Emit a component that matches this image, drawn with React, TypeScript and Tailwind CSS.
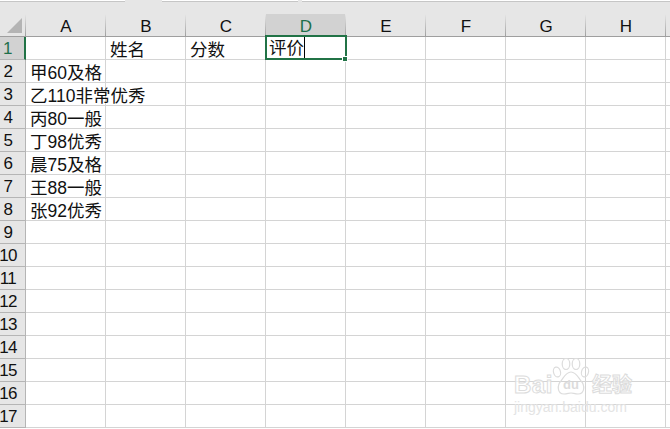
const cols = ["A", "B", "C", "D", "E", "F", "G", "H", ""];

const cells: Record<string, string> = {
  "1-1": "姓名",
  "1-2": "分数",
  "2-0": "甲60及格",
  "3-0": "乙110非常优秀",
  "4-0": "丙80一般",
  "5-0": "丁98优秀",
  "6-0": "晨75及格",
  "7-0": "王88一般",
  "8-0": "张92优秀",
};

const rows = Array.from({ length: 17 }, (_, i) => i + 1);

function Watermark() {
  return (
    <div className="absolute left-[514px] top-[357px] w-[122px] pointer-events-none text-white/70 [-webkit-text-stroke:1px_#dcdcdc]">
      <div className="flex items-end h-[38px]">
        <span className="w-[38px] text-[24px] font-bold leading-[20px] tracking-[0.5px]">Bai</span>
        <svg width="38" height="37" viewBox="0 0 38 37" fill="none" stroke="#dcdcdc" strokeWidth="1.2" className="shrink-0 [-webkit-text-stroke:0]">
          <ellipse cx="5" cy="14" rx="3.5" ry="5" transform="rotate(-15 5 14)" />
          <ellipse cx="14" cy="6" rx="3.8" ry="5.5" />
          <ellipse cx="24" cy="6" rx="3.8" ry="5.5" />
          <ellipse cx="33" cy="14" rx="3.5" ry="5" transform="rotate(15 33 14)" />
          <path d="M19 14c-5 0-7 5-10 9-4 4-4 13 3 13 3 0 5-1 7-1s4 1 7 1c7 0 7-9 3-13-3-4-5-9-10-9z" />
          <text x="19" y="31" textAnchor="middle" fontSize="13" fontWeight="700" fill="#dcdcdc" stroke="none">du</text>
        </svg>
        <span className="ml-[2px] text-[20px] font-bold leading-[22px] whitespace-nowrap" style={{ fontFamily: '"Noto Sans CJK SC", sans-serif' }}>经验</span>
      </div>
      <div className="mt-[5px] text-[14px] leading-[14px] whitespace-nowrap text-[#e4e4e4] [-webkit-text-stroke:0]">jingyan.baidu.com</div>
    </div>
  );
}

export default function App() {
  return (
    <div className="relative w-[670px] h-[429px] overflow-hidden bg-white text-[17.5px] text-[#111]" style={{ fontFamily: '"Liberation Sans", Arial, "Noto Sans CJK SC", sans-serif' }}>
      {/* ribbon leftovers at the very top */}
      <div className="flex h-[2px] bg-[#e6e6e6]">
        <div className="w-[125px] bg-white border-b border-[#c6c6c6]" />
        <div className="w-[37px]" />
        <div className="w-[136px] bg-white border-b border-[#c6c6c6]" />
        <div className="w-[4px]" />
        <div className="flex-1 bg-white border-b border-[#c6c6c6]" />
      </div>
      <div className="h-[12px] bg-[#e6e6e6]" />

      {/* column headers */}
      <div className="flex h-[23px] bg-[#e6e6e6] border-b border-[#9f9f9f]">
        <div className="relative w-[26px] shrink-0">
          <div className="absolute left-[7px] top-[4px] w-0 h-0 border-l-[15px] border-l-transparent border-b-[15px] border-b-[#b4b4b4]" />
          <div className="absolute right-0 top-0 w-[1px] h-full bg-linear-to-b from-[#e6e6e6] to-[#a0a0a0]" />
        </div>
        {cols.map((c) => (
          <div
            key={c || "I"}
            className={`relative w-[80px] shrink-0 flex items-center justify-center text-[17px] pt-[3px] ${c === "D" ? "bg-[#d2d2d2] text-[#1f6f4a]" : ""}`}
          >
            {c}
            <div className="absolute right-0 top-0 w-[1px] h-full bg-linear-to-b from-[#e6e6e6] to-[#a0a0a0]" />
          </div>
        ))}
      </div>

      {/* rows */}
      {rows.map((r) => (
        <div key={r} className="flex h-[23px]">
          <div className={`w-[26px] shrink-0 flex items-center justify-center pr-[9px] pt-[2px] text-[17px] tracking-[-0.6px] border-b border-[#b5b5b5] ${r === 1 ? "bg-[#d2d2d2] text-[#1f6f4a] border-r-2 border-r-[#217346]" : "bg-[#e6e6e6] border-r border-r-[#b5b5b5]"}`}>
            {r}
          </div>
          {cols.map((c, i) => (
            <div key={i} className="relative w-[80px] shrink-0 border-r border-b border-[#d4d4d4]">
              {cells[`${r}-${i}`] && (
                <span className="absolute left-[4px] top-[2px] leading-[22px] whitespace-nowrap z-10">{cells[`${r}-${i}`]}</span>
              )}
              {r === 1 && c === "D" && (
                <div className="absolute -left-[1px] -top-[2px] w-[82px] h-[25px] border-2 border-[#217346] z-20">
                  <span className="absolute left-[2px] top-0 h-[21px] leading-[22px] flex items-center">
                    评价<span className="inline-block w-[1px] h-[21px] bg-black" />
                  </span>
                  <div className="absolute -right-[3px] -bottom-[4px] w-[6px] h-[6px] bg-[#217346] border border-white" />
                </div>
              )}
            </div>
          ))}
        </div>
      ))}

      <Watermark />
    </div>
  );
}
